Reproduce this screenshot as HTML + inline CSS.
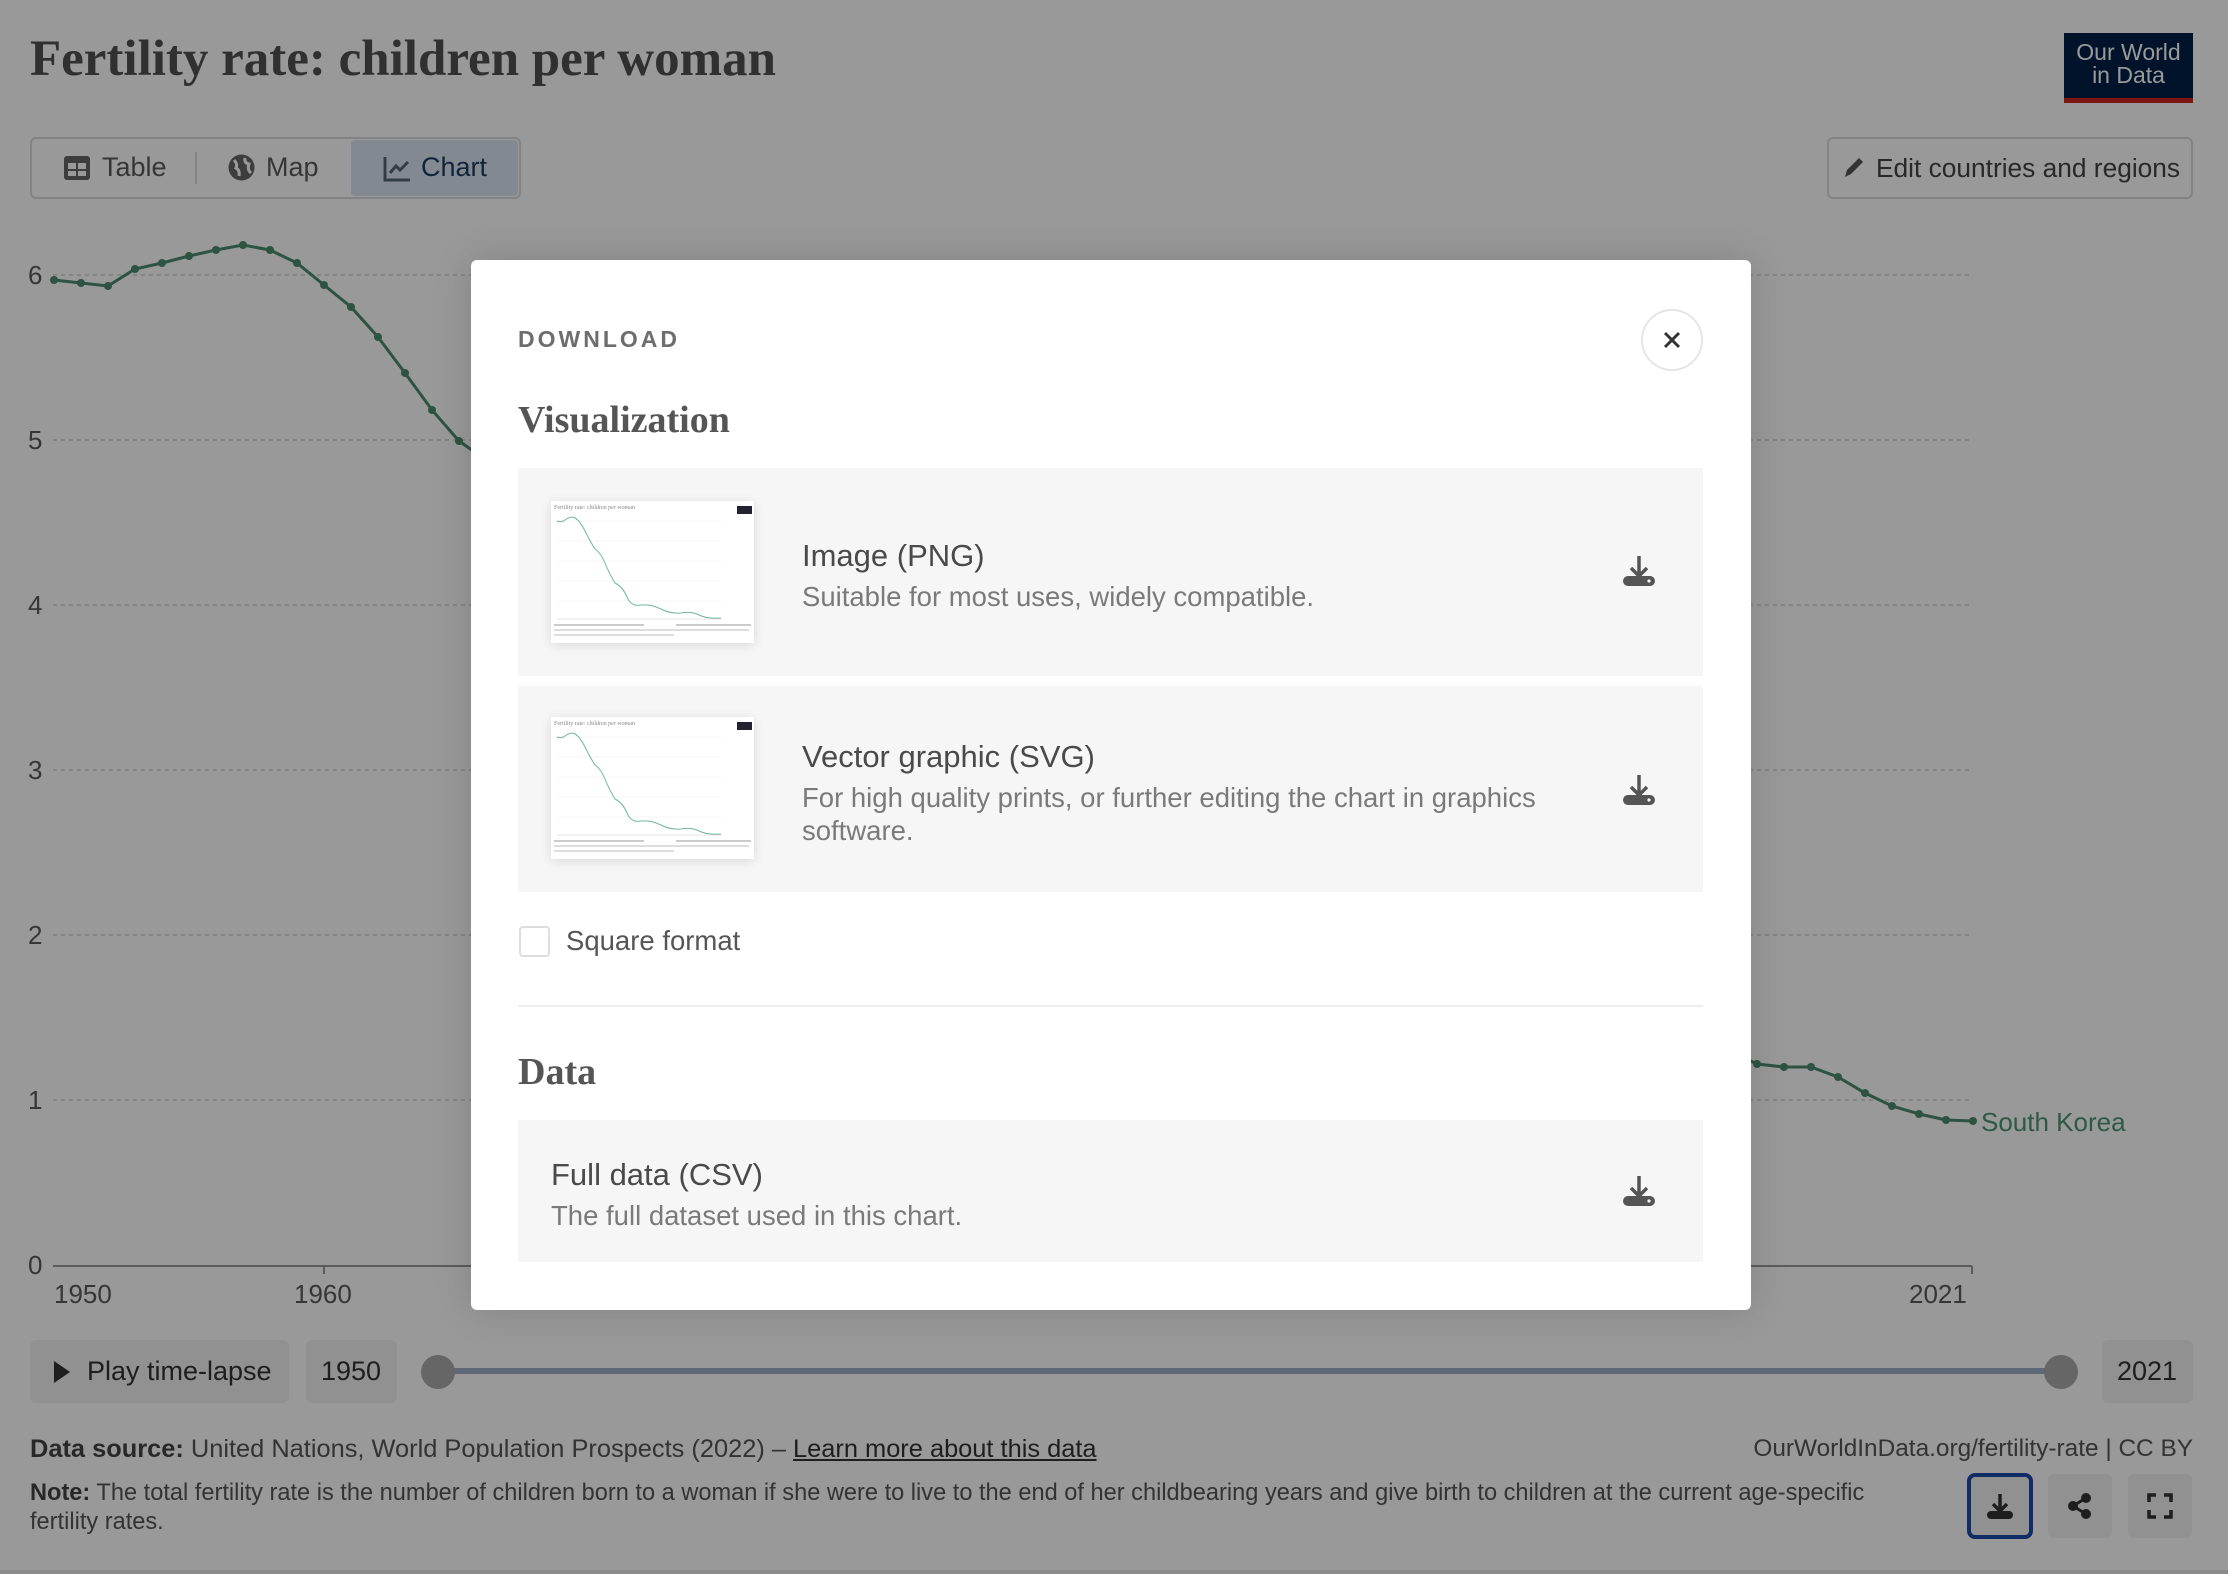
<!DOCTYPE html>
<html><head><meta charset="utf-8">
<style>
*{margin:0;padding:0;box-sizing:border-box}
body{width:2228px;height:1574px;position:relative;background:#fff;font-family:"Liberation Sans",sans-serif;overflow:hidden;color:#5b5b5b}
.a{position:absolute}
.serif{font-family:"Liberation Serif",serif}
.btn{position:absolute;background:#f2f2f2;border-radius:6px}
#ov{position:absolute;left:0;top:0;width:2228px;height:1574px;background:rgba(0,0,0,0.4)}
.card{position:absolute;left:518px;width:1185px;background:#f6f6f6}
.ct{position:absolute;left:284px;font-size:31px;color:#4a4a4a}
.cd{position:absolute;left:284px;font-size:27.5px;color:#7a7a7a;line-height:33px}
</style></head><body>
<div class="a serif" style="left:30px;top:30px;font-size:51px;color:#505050;font-weight:bold;letter-spacing:0px">Fertility rate: children per woman</div>
<div class="a" style="left:2064px;top:33px;width:129px;height:70px;background:#002147;color:#fff;font-size:23px;line-height:23px;text-align:center;padding-top:8px;border-bottom:5px solid #ce261e">Our World<br>in Data</div>
<div class="a" style="left:30px;top:137px;width:491px;height:62px;border:2px solid #dadada;border-radius:6px"></div>
<div class="a" style="left:351px;top:140px;width:167px;height:56px;background:#dbe5f0;border-radius:4px"></div>
<div class="a" style="left:195px;top:152px;width:2px;height:32px;background:#ddd"></div>
<svg class="a" style="left:64px;top:156px" width="26" height="24"><rect x="0" y="0" width="26" height="24" rx="3" fill="#666"/><rect x="4" y="7" width="8" height="6" fill="#fff"/><rect x="14" y="7" width="8" height="6" fill="#fff"/><rect x="4" y="15" width="8" height="5" fill="#fff"/><rect x="14" y="15" width="8" height="5" fill="#fff"/></svg>
<div class="a" style="left:102px;top:152px;font-size:27px;color:#5b5b5b">Table</div>
<svg class="a" style="left:228px;top:154px" width="27" height="27"><circle cx="13.5" cy="13.5" r="13" fill="#666"/><path d="M6 6 Q10 10 8 14 Q12 16 11 22 M17 4 Q16 9 21 10 Q19 16 23 19" stroke="#fff" stroke-width="3" fill="none"/></svg>
<div class="a" style="left:266px;top:152px;font-size:27px;color:#5b5b5b">Map</div>
<svg class="a" style="left:383px;top:156px" width="28" height="26"><path d="M2 1 V24 H27" stroke="#567" stroke-width="3" fill="none"/><path d="M7 17 L13 10 L17 14 L25 6" stroke="#567" stroke-width="3" fill="none"/></svg>
<div class="a" style="left:421px;top:152px;font-size:27px;color:#1d3d63">Chart</div>
<div class="a" style="left:1827px;top:137px;width:366px;height:62px;border:2px solid #dadada;border-radius:6px"></div>
<svg class="a" style="left:1841px;top:155px" width="24" height="26"><path d="M4 22 L6 15 L18 3 L22 7 L10 19 Z" fill="#555"/></svg>
<div class="a" style="left:1876px;top:153px;font-size:26.3px;color:#444">Edit countries and regions</div>
<svg class="a" style="left:0;top:0" width="2228" height="1340">
<g stroke="#ddd" stroke-width="2" stroke-dasharray="4,4">
<line x1="53" x2="1972" y1="275" y2="275"/><line x1="53" x2="1972" y1="440" y2="440"/><line x1="53" x2="1972" y1="605" y2="605"/><line x1="53" x2="1972" y1="770" y2="770"/><line x1="53" x2="1972" y1="935" y2="935"/><line x1="53" x2="1972" y1="1100" y2="1100"/></g>
<line x1="53" x2="1972" y1="1266" y2="1266" stroke="#999" stroke-width="2"/>
<line x1="324" x2="324" y1="1266" y2="1274" stroke="#999" stroke-width="2"/><line x1="1972" x2="1972" y1="1266" y2="1274" stroke="#999" stroke-width="2"/>
<g font-size="26" fill="#5b5b5b" font-family="Liberation Sans">
<text x="28" y="284">6</text><text x="28" y="449">5</text><text x="28" y="614">4</text><text x="28" y="779">3</text><text x="28" y="944">2</text><text x="28" y="1109">1</text><text x="28" y="1274">0</text>
<text x="54" y="1303">1950</text><text x="294" y="1303">1960</text><text x="1909" y="1303">2021</text>
<text x="1981" y="1131" fill="#4b9675">South Korea</text></g>
<polyline fill="none" stroke="#4b8a6e" stroke-width="3" points="54,280 81,283 108,286 135,269 162,263 189,256 216,250 243,245 270,250 297,263 324,285 351,307 378,337 405,373 432,410 459,441 486,460 1757,1064 1784,1067 1811,1067 1838,1077 1865,1093 1892,1106 1919,1114 1946,1120 1973,1121"/>
<g fill="#4b8a6e"><circle cx="54" cy="280" r="4"/><circle cx="81" cy="283" r="4"/><circle cx="108" cy="286" r="4"/><circle cx="135" cy="269" r="4"/><circle cx="162" cy="263" r="4"/><circle cx="189" cy="256" r="4"/><circle cx="216" cy="250" r="4"/><circle cx="243" cy="245" r="4"/><circle cx="270" cy="250" r="4"/><circle cx="297" cy="263" r="4"/><circle cx="324" cy="285" r="4"/><circle cx="351" cy="307" r="4"/><circle cx="378" cy="337" r="4"/><circle cx="405" cy="373" r="4"/><circle cx="432" cy="410" r="4"/><circle cx="459" cy="441" r="4"/><circle cx="1757" cy="1064" r="4"/><circle cx="1784" cy="1067" r="4"/><circle cx="1811" cy="1067" r="4"/><circle cx="1838" cy="1077" r="4"/><circle cx="1865" cy="1093" r="4"/><circle cx="1892" cy="1106" r="4"/><circle cx="1919" cy="1114" r="4"/><circle cx="1946" cy="1120" r="4"/><circle cx="1973" cy="1121" r="4"/></g>
</svg>
<div class="btn" style="left:30px;top:1340px;width:259px;height:63px"></div>
<svg class="a" style="left:52px;top:1360px" width="20" height="24"><path d="M2 1 L18 12 L2 23Z" fill="#333"/></svg>
<div class="a" style="left:87px;top:1356px;font-size:27px;color:#333">Play time-lapse</div>
<div class="btn" style="left:306px;top:1340px;width:91px;height:63px"></div>
<div class="a" style="left:321px;top:1356px;font-size:27px;color:#333">1950</div>
<div class="a" style="left:450px;top:1368px;width:1600px;height:6px;background:#a0b0c8"></div>
<div class="a" style="left:421px;top:1355px;width:34px;height:34px;border-radius:50%;background:#aaa"></div>
<div class="a" style="left:2044px;top:1355px;width:34px;height:34px;border-radius:50%;background:#aaa"></div>
<div class="btn" style="left:2102px;top:1340px;width:91px;height:63px"></div>
<div class="a" style="left:2117px;top:1356px;font-size:27px;color:#333">2021</div>
<div class="a" style="left:30px;top:1435px;font-size:25.4px;color:#555;white-space:nowrap"><b style="color:#444">Data source:</b> United Nations, World Population Prospects (2022) – <u style="color:#333">Learn more about this data</u></div>
<div class="a" style="right:35px;top:1435px;font-size:24.4px;color:#555">OurWorldInData.org/fertility-rate | CC BY</div>
<div class="a" style="left:30px;top:1479px;width:1900px;font-size:23.6px;line-height:29px;color:#555"><b style="color:#444">Note:</b> The total fertility rate is the number of children born to a woman if she were to live to the end of her childbearing years and give birth to children at the current age-specific fertility rates.</div>
<div class="a" style="left:1967px;top:1473px;width:66px;height:66px;border:4px solid #1a4aa8;border-radius:8px;background:#f2f2f2"></div>
<div class="btn" style="left:2048px;top:1474px;width:64px;height:64px"></div>
<div class="btn" style="left:2128px;top:1474px;width:64px;height:64px"></div>
<svg class="a" style="left:1986px;top:1492px" width="28" height="28"><path d="M14 2 V19 M7 12 L14 19 L21 12" stroke="#333" stroke-width="3.5" fill="none"/><rect x="1" y="19" width="26" height="8" rx="4" fill="#333"/></svg>
<svg class="a" style="left:2066px;top:1492px" width="28" height="28"><path d="M20 6 L7 14 L20 22" stroke="#333" stroke-width="3" fill="none"/><circle cx="20" cy="6" r="5" fill="#333"/><circle cx="7" cy="14" r="5" fill="#333"/><circle cx="20" cy="22" r="5" fill="#333"/></svg>
<svg class="a" style="left:2147px;top:1493px" width="26" height="26"><path d="M2 9 V2 H9 M17 2 H24 V9 M24 17 V24 H17 M9 24 H2 V17" stroke="#333" stroke-width="3.5" fill="none"/></svg>
<div class="a" style="left:0;top:1570px;width:2228px;height:4px;background:#e8e8e8"></div>
<div id="ov"></div>
<div class="a" style="left:471px;top:260px;width:1280px;height:1050px;background:#fff;border-radius:6px;box-shadow:0 0 40px rgba(0,0,0,0.15)"></div>
<div class="a" style="left:518px;top:326px;font-size:23px;font-weight:bold;letter-spacing:3px;color:#6d6d6d">DOWNLOAD</div>
<div class="a" style="left:1641px;top:309px;width:62px;height:62px;border:2px solid #e5e5e5;border-radius:50%"></div>
<svg class="a" style="left:1663px;top:331px" width="18" height="18"><path d="M2 2 L16 16 M16 2 L2 16" stroke="#333" stroke-width="3"/></svg>
<div class="a serif" style="left:518px;top:398px;font-size:38px;font-weight:bold;color:#555">Visualization</div>
<svg width="0" height="0" style="position:absolute"><defs>
<symbol id="th" viewBox="0 0 203 142"><rect width="203" height="142" fill="#fff"/><rect x="186" y="5" width="15" height="8" fill="#223"/><text x="3" y="8" font-size="6" fill="#888" font-family="Liberation Serif">Fertility rate: children per woman</text>
<g stroke="#eee" stroke-width="0.6"><line x1="6" x2="170" y1="20" y2="20"/><line x1="6" x2="170" y1="40" y2="40"/><line x1="6" x2="170" y1="60" y2="60"/><line x1="6" x2="170" y1="80" y2="80"/><line x1="6" x2="170" y1="100" y2="100"/></g>
<line x1="6" x2="170" y1="118" y2="118" stroke="#ccc" stroke-width="0.6"/>
<path d="M6 20 Q10 22 14 19 T22 16 Q28 18 34 30 T44 48 Q50 52 54 62 T64 82 Q72 86 76 96 T90 104 Q100 103 110 108 T130 112 Q140 110 148 114 T170 117" stroke="#6fb89a" stroke-width="1" fill="none"/>
<rect x="3" y="123" width="90" height="2" fill="#ccc"/><rect x="125" y="123" width="75" height="2" fill="#ccc"/><rect x="3" y="128" width="195" height="2" fill="#ddd"/><rect x="3" y="133" width="120" height="2" fill="#ddd"/></symbol></defs></svg>
<div class="card" style="top:468px;height:208px"></div>
<div class="card" style="top:686px;height:206px"></div>
<div class="card" style="top:1120px;height:142px"></div>
<svg class="a" style="left:551px;top:501px;box-shadow:0 2px 10px rgba(0,0,0,0.12)" width="203" height="142"><use href="#th"/></svg>
<svg class="a" style="left:551px;top:717px;box-shadow:0 2px 10px rgba(0,0,0,0.12)" width="203" height="142"><use href="#th"/></svg>
<div class="ct" style="left:802px;top:538px">Image (PNG)</div>
<div class="cd" style="left:802px;top:580px">Suitable for most uses, widely compatible.</div>
<div class="ct" style="left:802px;top:739px">Vector graphic (SVG)</div>
<div class="cd" style="left:802px;top:781px;width:780px">For high quality prints, or further editing the chart in graphics software.</div>
<div class="ct" style="left:551px;top:1157px">Full data (CSV)</div>
<div class="cd" style="left:551px;top:1199px">The full dataset used in this chart.</div>
<svg width="0" height="0" style="position:absolute"><defs><symbol id="dl" viewBox="0 0 32 32"><path d="M16 1 V20 M8 13 L16 21 L24 13" stroke="#555" stroke-width="3.5" fill="none"/><rect x="0" y="21" width="32" height="10" rx="5" fill="#555"/><circle cx="26" cy="26" r="1.6" fill="#f6f6f6"/></symbol></defs></svg>
<svg class="a" style="left:1623px;top:555px" width="32" height="32"><use href="#dl"/></svg>
<svg class="a" style="left:1623px;top:774px" width="32" height="32"><use href="#dl"/></svg>
<svg class="a" style="left:1623px;top:1175px" width="32" height="32"><use href="#dl"/></svg>
<div class="a" style="left:519px;top:926px;width:31px;height:31px;border:2px solid #ddd;border-radius:4px"></div>
<div class="a" style="left:566px;top:925px;font-size:27.5px;color:#555">Square format</div>
<div class="a" style="left:518px;top:1005px;width:1185px;height:2px;background:#eee"></div>
<div class="a serif" style="left:518px;top:1050px;font-size:38px;font-weight:bold;color:#555">Data</div>
</body></html>
